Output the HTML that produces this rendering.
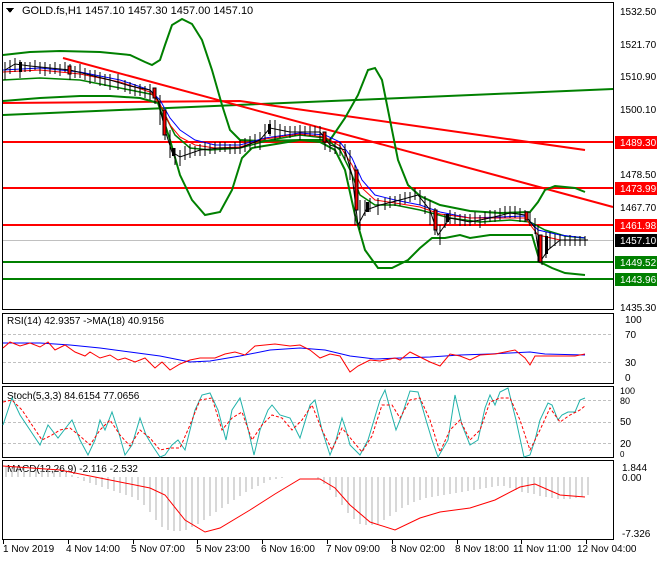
<!DOCTYPE html>
<html><head><meta charset="utf-8"><style>
body{margin:0;background:#fff;width:660px;height:560px;overflow:hidden;font-family:"Liberation Sans",sans-serif}
svg text{font-family:"Liberation Sans",sans-serif;font-size:10px;fill:#000}
</style></head><body>
<svg width="660" height="560" xmlns="http://www.w3.org/2000/svg" shape-rendering="crispEdges">
<rect width="660" height="560" fill="#fff"/>
<rect x="2.5" y="2.5" width="611" height="307" fill="none" stroke="#000"/>
<rect x="2.5" y="313.5" width="611" height="70" fill="none" stroke="#000"/>
<rect x="2.5" y="386.5" width="611" height="71" fill="none" stroke="#000"/>
<rect x="2.5" y="460.5" width="611" height="79" fill="none" stroke="#000"/>
<g shape-rendering="auto" fill="none">
<line x1="3" y1="240.5" x2="613" y2="240.5" stroke="#c0c0c0"/>
<line x1="3" y1="142" x2="613" y2="142" stroke="#f00" stroke-width="2"/>
<line x1="3" y1="188" x2="613" y2="188" stroke="#f00" stroke-width="2"/>
<line x1="3" y1="225" x2="613" y2="225" stroke="#f00" stroke-width="2"/>
<line x1="3" y1="262" x2="613" y2="262" stroke="#008000" stroke-width="2"/>
<line x1="3" y1="279" x2="613" y2="279" stroke="#008000" stroke-width="2"/>
<line x1="3" y1="115" x2="613" y2="89" stroke="#008000" stroke-width="2"/>
<polyline points="3,103 240,101 585,150" stroke="#f00" stroke-width="2"/>
<line x1="63" y1="58" x2="613" y2="207" stroke="#f00" stroke-width="2"/>
<polyline stroke="#008000" stroke-width="2" points="3,55 30,52 60,51 100,52 130,55 145,62 152,65 160,60 165,45 172,25 182,19 192,24 202,40 212,70 222,105 230,130 240,140 260,141 300,140 330,140 345,118 358,95 368,70 375,68 382,80 390,120 398,160 408,185 420,196 440,205 470,211 500,213 530,212 538,202 545,190 555,186 575,188 585,192"/>
<polyline stroke="#008000" stroke-width="2" points="3,101 40,98 80,96 110,96 140,98 158,103 170,140 180,175 192,200 205,215 220,212 232,190 242,158 252,148 270,145 300,140 320,142 335,150 345,170 355,215 365,250 378,268 392,268 408,260 420,248 432,238 445,238 460,235 470,238 490,235 520,235 532,235 540,262 552,268 565,273 585,275"/>
<polyline stroke="#008000" stroke-width="1.5" points="3,80 40,78 80,80 110,86 140,92 155,95 165,115 175,135 190,148 210,150 240,148 270,140 300,135 325,138 340,150 350,170 360,195 375,205 395,205 420,210 450,218 480,222 510,220 530,222 545,230 565,236 585,238"/>
<polyline stroke="#00f" stroke-width="1" points="3,70 40,68 80,72 120,80 150,90 160,100 170,118 180,130 195,140 215,145 240,145 265,138 300,133 325,135 340,142 352,158 362,180 375,195 395,200 420,205 440,212 470,218 500,217 525,216 538,230 560,235 585,238"/>
<polyline stroke="#f00" stroke-width="1" points="3,72 40,70 80,74 120,82 150,92 160,104 170,125 180,137 195,145 215,148 240,147 265,139 300,134 325,137 340,146 352,165 362,188 375,200 395,203 420,207 440,214 470,218 500,218 525,218 538,235 560,240 585,240"/>
<polyline stroke="#000" stroke-width="1" points="5,70 15,64 30,66 50,68 70,70 90,75 110,80 130,86 150,90 158,100 165,130 172,152 180,157 200,150 220,148 240,148 260,140 270,128 290,132 320,132 330,145 345,150 352,175 358,225 366,210 380,205 400,200 418,195 430,210 438,235 450,218 470,222 490,218 510,213 525,215 535,228 540,262 548,250 560,240 588,240"/>
<path stroke="#000" stroke-width="1" d="M5,62V80M10,60V74M15,58V72M20,60V78M25,62V72M30,62V72M35,60V70M40,62V74M45,62V76M50,64V74M55,62V74M60,64V76M65,62V72M70,64V80M75,66V78M80,64V78M85,68V80M90,70V84M95,70V82M100,72V86M105,74V86M110,74V90M118,74V90M125,80V92M130,82V94M135,84V96M140,84V96M145,86V98M150,84V100M155,88V104M160,95V125M165,110V140M170,130V158M175,148V165M180,150V166M185,146V160M190,144V158M195,146V156M200,144V156M205,142V156M210,144V154M215,142V154M220,142V152M225,142V152M230,144V154M235,142V154M240,140V154M245,138V152M250,136V150M255,134V148M260,132V150M265,124V140M270,120V136M275,120V140M280,124V138M285,126V136M290,126V138M295,126V136M300,125V140M305,126V136M310,126V136M315,126V136M320,126V140M325,132V150M330,138V152M335,142V154M340,142V156M345,144V160M350,150V180M355,165V225M360,200V230M365,200V216M370,198V212M378,198V215M385,198V210M390,196V208M395,196V206M400,194V206M405,192V204M410,192V202M415,188V200M420,190V205M425,196V214M430,200V225M435,208V235M440,225V245M445,214V228M450,210V224M455,212V224M460,214V226M465,214V226M470,214V226M475,212V224M480,215V228M485,212V224M490,210V222M495,210V222M500,208V220M505,206V218M510,206V218M515,206V218M520,208V222M525,210V222M530,212V226M535,218V234M538,225V262M542,245V265M546,232V258M550,232V248M555,234V246M560,234V246M565,236V246M570,235V246M575,236V246M580,236V246M585,236V246"/>
</g>
<g fill="#f00" stroke="#000" stroke-width="1"><rect x="163" y="110" width="3" height="25"/><rect x="355" y="170" width="3" height="40"/><rect x="539" y="235" width="3" height="27"/><rect x="434" y="210" width="3" height="20"/><rect x="68" y="66" width="3" height="8"/><rect x="153" y="88" width="3" height="10"/><rect x="323" y="132" width="3" height="10"/><rect x="525" y="212" width="3" height="8"/></g>
<g fill="#000"><rect x="19" y="62" width="3" height="10"/><rect x="172" y="148" width="3" height="8"/><rect x="268" y="124" width="3" height="10"/><rect x="366" y="202" width="3" height="10"/><rect x="545" y="236" width="3" height="18"/><rect x="446" y="214" width="3" height="8"/></g>
<text x="22" y="14" style="font-size:11px">GOLD.fs,H1  1457.10 1457.30 1457.00 1457.10</text>
<path d="M6,8h8l-4,5z" fill="#000"/>
<g>
<text x="620" y="15">1532.50</text><text x="620" y="48">1521.70</text><text x="620" y="80">1510.90</text><text x="620" y="113">1500.10</text><text x="620" y="178">1478.50</text><text x="620" y="211">1467.70</text><text x="620" y="311">1435.30</text>
<rect x="615" y="136" width="42" height="13" fill="#f00"/><text x="620" y="146" style="fill:#fff">1489.30</text>
<rect x="615" y="182" width="42" height="13" fill="#f00"/><text x="620" y="192" style="fill:#fff">1473.99</text>
<rect x="615" y="219" width="42" height="13" fill="#f00"/><text x="620" y="229" style="fill:#fff">1461.98</text>
<rect x="615" y="234" width="42" height="13" fill="#000"/><text x="620" y="244" style="fill:#fff">1457.10</text>
<rect x="615" y="256" width="42" height="13" fill="#008000"/><text x="620" y="266" style="fill:#fff">1449.52</text>
<rect x="615" y="273" width="42" height="13" fill="#008000"/><text x="620" y="283" style="fill:#fff">1443.96</text>
</g>
<g stroke="#c0c0c0" stroke-dasharray="3,2"><line x1="3" y1="334.5" x2="613" y2="334.5"/><line x1="3" y1="362.5" x2="613" y2="362.5"/></g>
<text x="7" y="324">RSI(14) 42.9357  -&gt;MA(18) 40.9156</text>
<text x="625" y="323">100</text><text x="625" y="338">70</text><text x="625" y="366">30</text><text x="625" y="381">0</text>
<g fill="none" shape-rendering="auto">
<polyline stroke="#00f" points="3,343 40,343 70,345 100,348 130,352 160,356 190,362 210,361 240,356 270,350 300,348 325,350 350,356 375,359 400,358 430,357 460,355 490,354 510,353 530,352 545,354 585,355"/>
<polyline stroke="#f00" points="3,348 10,342 20,346 30,343 40,347 48,342 55,350 65,345 75,352 85,356 90,352 100,358 110,355 118,360 125,358 135,362 145,358 155,368 162,362 170,370 180,364 190,360 200,358 215,358 225,354 235,352 245,355 255,346 265,345 275,344 290,346 300,345 310,350 320,358 330,354 340,356 350,372 358,366 370,360 380,361 395,358 400,360 410,352 420,357 430,362 440,366 450,354 460,356 470,360 480,355 495,354 505,352 515,350 525,358 530,365 535,356 545,356 560,356 575,356 585,354"/>
</g>
<g stroke="#c0c0c0" stroke-dasharray="3,2"><line x1="3" y1="400.5" x2="613" y2="400.5"/><line x1="3" y1="422.5" x2="613" y2="422.5"/><line x1="3" y1="443.5" x2="613" y2="443.5"/></g>
<text x="7" y="399">Stoch(5,3,3) 84.6154 77.0656</text>
<text x="620" y="394" style="font-size:9px">100</text><text x="620" y="404" style="font-size:9px">80</text><text x="620" y="425">50</text><text x="620" y="447">20</text><text x="620" y="457" style="font-size:8px">0</text>
<g fill="none" shape-rendering="auto">
<polyline stroke="#20b2aa" points="3,425 12,398 20,415 30,430 40,445 48,425 58,438 68,425 72,420 80,440 88,455 95,440 100,420 105,430 112,412 118,430 125,455 132,445 140,418 146,435 152,445 160,457 165,455 172,445 178,440 185,450 195,410 202,395 210,393 218,410 226,440 232,410 240,398 246,420 254,455 260,430 268,410 272,405 280,415 290,418 300,438 310,405 315,400 322,430 330,455 336,440 342,418 346,430 350,445 360,455 368,440 374,420 380,400 385,390 392,416 396,430 402,415 410,391 418,392 426,420 432,440 438,457 448,440 455,395 462,425 470,445 478,440 485,408 490,395 495,405 500,392 508,388 516,420 524,457 530,455 535,440 540,420 548,403 552,405 558,420 562,415 568,412 575,412 580,400 585,398"/>
<polyline stroke="#f00" stroke-dasharray="3,2" points="3,402 12,400 22,410 32,425 42,440 52,435 60,430 70,428 80,436 90,445 100,430 110,420 120,435 130,446 140,430 150,438 160,450 170,448 180,448 190,425 200,400 212,398 222,430 232,418 242,412 252,440 262,425 272,415 282,418 292,430 302,420 312,405 322,430 332,450 342,428 352,440 362,452 372,436 382,405 392,405 400,418 410,400 420,398 430,420 440,452 450,430 460,420 470,440 480,430 490,402 500,398 510,398 520,420 530,450 540,430 550,408 560,422 570,415 580,410 586,405"/>
</g>
<text x="7" y="472">MACD(12,26,9) -2.116 -2.532</text>
<text x="622" y="471">1.844</text><text x="622" y="481">0.00</text><text x="622" y="537">-7.326</text>
<path fill="none" stroke="#b0b0b0" d="M6,477V466M12,477V467M18,477V467M24,477V468M30,477V468M36,477V469M42,477V470M48,477V470M54,477V471M60,477V472M66,477V473M72,477V475M78,477V478M84,477V481M90,477V483M96,477V485M102,477V487M108,477V489M114,477V491M120,477V493M126,477V495M132,477V497M138,477V500M144,477V505M150,477V512M156,477V520M162,477V527M168,477V530M174,477V531M180,477V531M186,477V530M192,477V527M198,477V524M204,477V520M210,477V516M216,477V512M222,477V508M228,477V504M234,477V500M240,477V496M246,477V492M252,477V489M258,477V486M264,477V483M270,477V480M276,477V479M282,477V478M318,477V479M324,477V484M330,477V490M336,477V497M342,477V505M348,477V513M354,477V519M360,477V524M366,477V525M372,477V525M378,477V524M384,477V520M390,477V516M396,477V512M402,477V508M408,477V505M414,477V502M420,477V500M426,477V498M432,477V497M438,477V496M444,477V495M450,477V494M456,477V493M462,477V492M468,477V491M474,477V490M480,477V489M486,477V488M492,477V487M498,477V486M504,477V486M510,477V488M516,477V490M522,477V492M528,477V493M534,477V494M540,477V496M546,477V497M552,477V498M558,477V499M564,477V499M570,477V499M576,477V498M582,477V497M588,477V495"/>
<polyline fill="none" stroke="#f00" shape-rendering="auto" points="3,466 60,470 100,478 150,488 165,495 185,520 205,532 220,528 250,510 275,494 300,479 320,479 335,488 350,505 370,522 395,530 420,518 440,512 470,508 495,500 520,487 535,484 560,495 585,497"/>
<g stroke="#000"><path d="M3.5,540V544M68.5,540V544M133.5,540V544M197.5,540V544M262.5,540V544M327.5,540V544M392.5,540V544M457.5,540V544M521.5,540V544M586.5,540V544"/></g>
<g><text x="3" y="552">1 Nov 2019</text><text x="66" y="552">4 Nov 14:00</text><text x="131" y="552">5 Nov 07:00</text><text x="196" y="552">5 Nov 23:00</text><text x="261" y="552">6 Nov 16:00</text><text x="326" y="552">7 Nov 09:00</text><text x="391" y="552">8 Nov 02:00</text><text x="455" y="552">8 Nov 18:00</text><text x="513" y="552">11 Nov 11:00</text><text x="577" y="552">12 Nov 04:00</text></g>
</svg>
</body></html>
